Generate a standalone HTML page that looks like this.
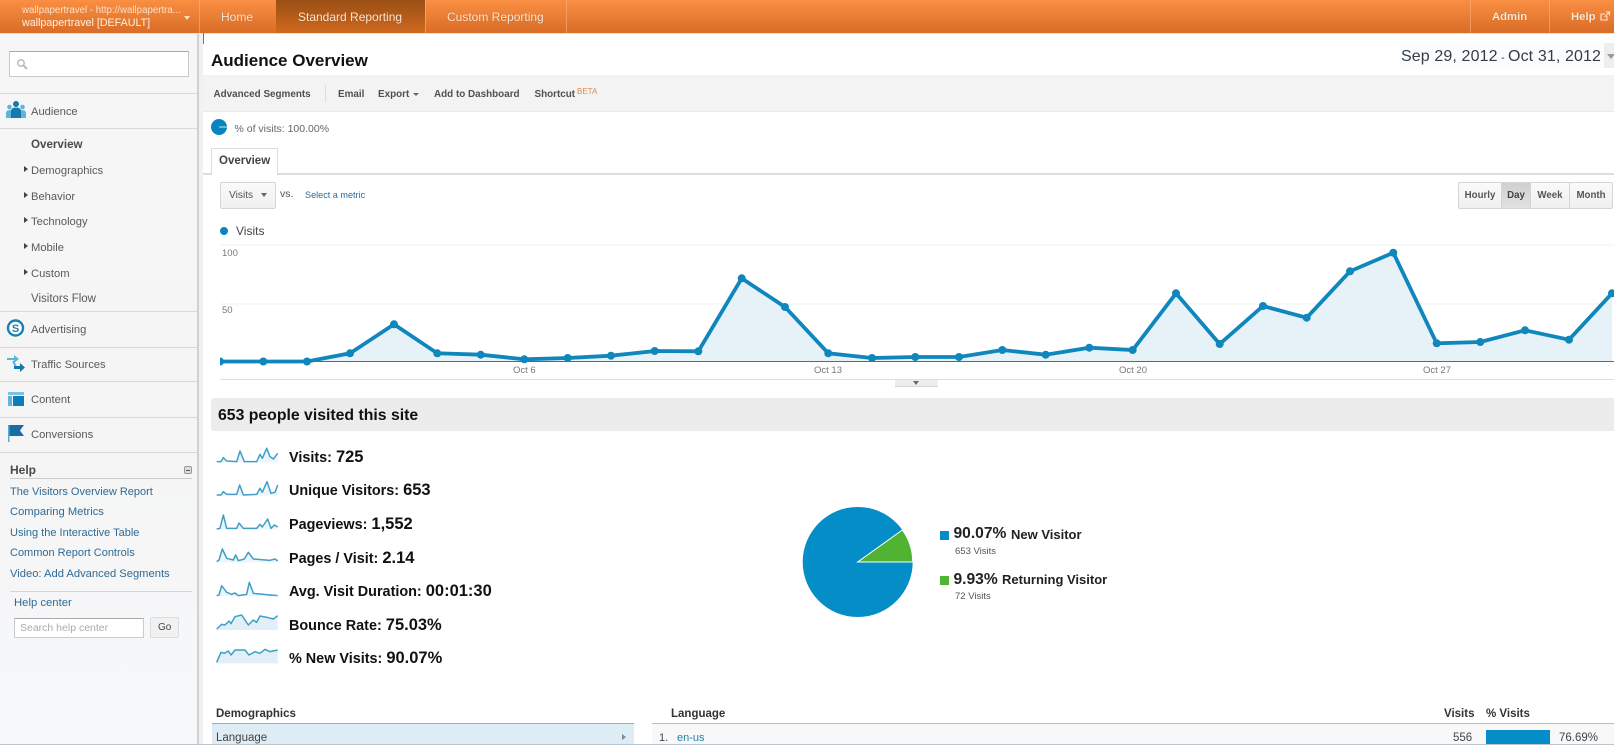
<!DOCTYPE html>
<html><head><meta charset="utf-8"><title>Audience Overview</title>
<style>
html,body{margin:0;padding:0;background:#fff}
body{position:relative;width:1614px;height:745px;overflow:hidden;font-family:"Liberation Sans",Arial,sans-serif;color:#444;filter:blur(.35px)}
.b{position:absolute;box-sizing:border-box}
.t{position:absolute;white-space:nowrap;line-height:20px;height:20px}
.nav{font-size:12px;color:#fbe6d4;top:7px;text-shadow:0 0 1px rgba(140,60,0,.5)}
.dv{position:absolute;top:0;height:33px;width:1px;background:rgba(250,190,140,.5)}
.s{font-size:11.2px;color:#5a5a5a;left:31px}
.ln{position:absolute;left:0;width:197px;height:1px;background:#d8d8d8}
.ar{position:absolute;left:24px;width:0;height:0;border-left:4px solid #444;border-top:3px solid transparent;border-bottom:3px solid transparent}
.h{font-size:11px;color:#2f6a95;left:10px}
.tb{font-size:9.9px;font-weight:bold;color:#505050;top:85px}
.m{left:289px;font-size:14.4px;font-weight:bold;color:#111}
.m b{font-size:16.5px}
.cell{position:absolute;top:182px;height:27px;line-height:26px;text-align:center;font-size:9.7px;font-weight:bold;color:#555;border:1px solid #d5d5d5;background:linear-gradient(#fafafa,#f0f0f0);box-sizing:border-box}
</style></head><body>

<!-- header -->
<div class="b" style="left:0;top:0;width:1614px;height:33px;background:linear-gradient(#f98f42,#d96c27)"></div>
<div class="b" style="left:276px;top:0;width:149px;height:33px;background:linear-gradient(#9a4f14,#d0691f)"></div>
<div class="dv" style="left:199px"></div><div class="dv" style="left:425px"></div><div class="dv" style="left:566px"></div><div class="dv" style="left:1470px"></div><div class="dv" style="left:1549px"></div>
<div class="b" style="left:0;top:33px;width:1614px;height:1px;background:#f3ddc8"></div>
<div class="t" style="left:22px;top:1px;font-size:9.7px;color:#fde0c6">wallpapertravel - http://wallpapertra...</div>
<div class="t" style="left:22px;top:13px;font-size:10.7px;color:#fff0e2">wallpapertravel [DEFAULT]</div>
<div class="b" style="left:184px;top:16px;width:0;height:0;border:3.5px solid transparent;border-top:4px solid #fde0c6;border-bottom:0"></div>
<div class="t nav" style="left:221px">Home</div>
<div class="t nav" style="left:298px">Standard Reporting</div>
<div class="t nav" style="left:447px">Custom Reporting</div>
<div class="t nav" style="left:1492px;font-size:11.3px;font-weight:bold">Admin</div>
<div class="t nav" style="left:1571px;font-size:11.3px;font-weight:bold">Help</div>
<svg class="b" style="left:1600px;top:11px" width="10" height="11" viewBox="0 0 10 11"><path d="M7 5v4H1V3h4M4.500 6L9 1.500M6 1h3.500v3.500" fill="none" stroke="#fbe6d4" stroke-width="1.100"/></svg>

<!-- sidebar -->
<div class="b" style="left:0;top:34px;width:197px;height:711px;background:linear-gradient(#f6f6f6 0,#f5f5f5 420px,#f7f8fa 100%)"></div>
<div class="b" style="left:197px;top:34px;width:2px;height:711px;background:#d0d0d0"></div>
<div class="b" style="left:199px;top:34px;width:4px;height:711px;background:#f1f1f1"></div>
<div class="b" style="left:203px;top:33px;width:1px;height:11px;background:#777"></div>
<div class="b" style="left:9px;top:51px;width:180px;height:26px;background:#fff;border:1px solid #c9c9c9;border-top-color:#aaa"></div>
<svg class="b" style="left:16px;top:58px" width="13" height="13" viewBox="0 0 13 13"><circle cx="5" cy="5" r="3.200" fill="none" stroke="#bbb" stroke-width="1.500"/><path d="M7.500 7.500L11 11" stroke="#bbb" stroke-width="2"/></svg>
<div class="ln" style="top:93px"></div>
<div class="ln" style="top:128px"></div>
<svg class="b" style="left:5px;top:100px" width="22" height="19" viewBox="0 0 22 19"><circle cx="4.500" cy="7" r="2.300" fill="#5fb5d8"/><circle cx="17.500" cy="7" r="2.300" fill="#5fb5d8"/><path d="M1 18v-4q0-4 3.500-4t3.500 4v4zM14 18v-4q0-4 3.500-4t3.500 4v4z" fill="#5fb5d8"/><circle cx="11" cy="4" r="3" fill="#1479ab"/><path d="M6 18v-7q0-3.500 5-3.500t5 3.500v7z" fill="#1479ab"/></svg>
<div class="t s" style="top:102px">Audience</div>
<div class="t s" style="top:135px;font-weight:bold;color:#4a4a4a;font-size:11.6px">Overview</div>
<div class="ar" style="top:166px"></div><div class="t s" style="top:161px">Demographics</div>
<div class="ar" style="top:192px"></div><div class="t s" style="top:187px">Behavior</div>
<div class="ar" style="top:217px"></div><div class="t s" style="top:212px">Technology</div>
<div class="ar" style="top:243px"></div><div class="t s" style="top:238px">Mobile</div>
<div class="ar" style="top:269px"></div><div class="t s" style="top:264px">Custom</div>
<div class="t s" style="top:288.500px;font-size:11.500px">Visitors Flow</div>
<div class="ln" style="top:311px"></div>
<svg class="b" style="left:6px;top:319px" width="19" height="19" viewBox="0 0 19 19"><circle cx="9.500" cy="9" r="7.500" fill="#fff" stroke="#1a80b0" stroke-width="2.400"/><text x="9.500" y="13" text-anchor="middle" font-size="11" font-weight="bold" fill="#1a80b0" font-family="Liberation Sans">S</text></svg>
<div class="t s" style="top:320px">Advertising</div>
<div class="ln" style="top:347px"></div>
<svg class="b" style="left:6px;top:353px" width="20" height="20" viewBox="0 0 20 20"><path d="M1 5h7V2l5 4-5 4V7H1z" fill="#5fb5d8"/><path d="M7 8l3 6" stroke="#5fb5d8" stroke-width="2"/><path d="M8 13h6v-3l5 4.500-5 4.500v-3H8z" fill="#1479ab"/></svg>
<div class="t s" style="top:355px">Traffic Sources</div>
<div class="ln" style="top:381px"></div>
<svg class="b" style="left:8px;top:392px" width="16" height="14" viewBox="0 0 16 14"><rect width="16" height="3" fill="#7cc3e0"/><rect y="4" width="4" height="10" fill="#5fb5d8"/><rect x="5" y="4" width="11" height="10" fill="#0d7fb8"/></svg>
<div class="t s" style="top:390px">Content</div>
<div class="ln" style="top:417px"></div>
<svg class="b" style="left:7px;top:424px" width="18" height="19" viewBox="0 0 18 19"><rect x="1" y="1" width="1.500" height="17" fill="#5fa8cc"/><path d="M2.500 1H17l-4 5.500 4 5.500H2.500z" fill="#1a6ea6"/></svg>
<div class="t s" style="top:425px">Conversions</div>
<div class="ln" style="top:452px"></div>
<div class="t" style="left:10px;top:460px;font-size:12px;font-weight:bold;color:#4a4a4a">Help</div>
<div class="b" style="left:184px;top:466px;width:8px;height:8px;background:#ddd;border:1px solid #999;border-radius:2px"><div class="b" style="left:1px;top:2.500px;width:4px;height:1px;background:#555"></div></div>
<div class="b" style="left:10px;top:478px;width:182px;height:1px;background:#ccc"></div>
<div class="t h" style="top:482px">The Visitors Overview Report</div>
<div class="t h" style="top:502px;font-size:11.200px">Comparing Metrics</div>
<div class="t h" style="top:522.500px">Using the Interactive Table</div>
<div class="t h" style="top:543px">Common Report Controls</div>
<div class="t h" style="top:564px;font-size:11.200px">Video: Add Advanced Segments</div>
<div class="b" style="left:10px;top:591px;width:182px;height:1px;background:#d5d5d5"></div>
<div class="t h" style="left:14px;top:593px;font-size:11.300px">Help center</div>
<div class="b" style="left:14px;top:618px;width:130px;height:20px;background:#fff;border:1px solid #ccc;border-top-color:#aaa"></div>
<div class="t" style="left:20px;top:617.500px;font-size:10.500px;color:#aaa">Search help center</div>
<div class="b" style="left:150px;top:617px;width:29px;height:21px;background:#f1f1f1;border:1px solid #ddd;border-radius:2px"></div>
<div class="t" style="left:158px;top:618px;font-size:10px;color:#444">Go</div>

<!-- title -->
<div class="t" style="left:211px;top:51px;font-size:17px;font-weight:bold;color:#111">Audience Overview</div>
<div class="b" style="left:1400px;top:43px;width:214px;height:25px;background:#fbfcff"></div>
<div class="b" style="left:1604px;top:43px;width:10px;height:25px;background:#eee"></div>
<div class="t" style="left:1401px;top:47px;font-size:16px;color:#333c48;letter-spacing:.12px">Sep 29, 2012</div>
<div class="t" style="left:1501px;top:48px;font-size:11px;color:#333c48">-</div>
<div class="t" style="left:1508px;top:47px;font-size:16px;color:#333c48;letter-spacing:.12px">Oct 31, 2012</div>
<div class="b" style="left:1607px;top:54px;width:0;height:0;border:4px solid transparent;border-top:5px solid #999;border-bottom:0"></div>

<!-- toolbar -->
<div class="b" style="left:203px;top:75px;width:1411px;height:37px;background:#f3f3f3;border-bottom:1px solid #eaeaea"></div>
<div class="t tb" style="left:213.500px">Advanced Segments</div>
<div class="b" style="left:325px;top:85px;width:1px;height:17px;background:#ddd"></div>
<div class="t tb" style="left:338px">Email</div>
<div class="t tb" style="left:378px">Export</div>
<div class="b" style="left:413px;top:93px;width:0;height:0;border:3px solid transparent;border-top:3px solid #666;border-bottom:0"></div>
<div class="t tb" style="left:434px">Add to Dashboard</div>
<div class="t tb" style="left:534.500px">Shortcut</div>
<div class="t" style="left:577px;top:81.500px;font-size:8px;color:#e58a45">BETA</div>

<!-- segment -->
<svg class="b" style="left:210px;top:118px" width="18" height="18" viewBox="0 0 18 18"><circle cx="9" cy="9" r="8" fill="#0a84bf"/><path d="M9 9H17" stroke="#fff" stroke-width=".8"/></svg>
<div class="t" style="left:234.500px;top:119px;font-size:10.500px;color:#666">% of visits: 100.00%</div>

<!-- tabs -->
<div class="b" style="left:203px;top:173px;width:1411px;height:2px;background:#ddd"></div>
<div class="b" style="left:211px;top:148px;width:67px;height:27px;background:#fff;border:1px solid #ddd;border-bottom:0"></div>
<div class="t" style="left:219px;top:150.500px;font-size:11.500px;font-weight:bold;color:#444">Overview</div>

<!-- controls -->
<div class="b" style="left:220px;top:182px;width:56px;height:27px;background:linear-gradient(#fafafa,#f0f0f0);border:1px solid #d5d5d5;border-radius:2px"></div>
<div class="t" style="left:229px;top:185.500px;font-size:10.200px;color:#555">Visits</div>
<div class="b" style="left:261px;top:193px;width:0;height:0;border:3.500px solid transparent;border-top:4px solid #666;border-bottom:0"></div>
<div class="t" style="left:280px;top:184px;font-size:10.500px;color:#555">vs.</div>
<div class="t" style="left:305px;top:185px;font-size:9.100px;color:#2a6a9a">Select a metric</div>
<div class="cell" style="left:1458px;width:44px;border-radius:2px 0 0 2px">Hourly</div>
<div class="cell" style="left:1501px;width:30px;background:linear-gradient(#cfcfcf,#e2e2e2);color:#444">Day</div>
<div class="cell" style="left:1530px;width:40px">Week</div>
<div class="cell" style="left:1569px;width:44px;border-radius:0 2px 2px 0">Month</div>

<div class="b" style="left:220px;top:227px;width:8px;height:8px;border-radius:50%;background:#0a84bf"></div>
<div class="t" style="left:236px;top:221px;font-size:12px;color:#444">Visits</div>

<!-- chart -->
<svg class="b" style="left:220px;top:230px" width="1394" height="170" viewBox="220 230 1394 170">
<path d="M220 245H1614M220 304H1614" stroke="#f1f1f1" stroke-width="1"/>
<path d="M220 362L263.300 361.700 307 362 350 353.300 394 324.300 437.300 353.300 480.700 354.700 524.300 359.300 567.700 358 611 355.700 654.700 351 698.300 351.300 741.700 278.300 785 307 828.300 353.300 872 358 915.300 357 959 357 1002.300 350 1045.700 354.700 1089.300 347.700 1132.700 350 1176 293.300 1219.700 344 1263 306 1306.700 317.700 1350 271.300 1393.300 252.700 1436.700 343.300 1480.300 342 1525 330.300 1569 339.700 1612 293.300V362Z" fill="#e6f1f8"/>
<path d="M220 361.500H1614" stroke="#666" stroke-width="1"/>
<path d="M220 379.500H1614" stroke="#dedede" stroke-width="1"/>
<path d="M220 361.500L263.300 361.500 307 361.500 350 353.300 394 324.300 437.300 353.300 480.700 354.700 524.300 359.300 567.700 358 611 355.700 654.700 351 698.300 351.300 741.700 278.300 785 307 828.300 353.300 872 358 915.300 357 959 357 1002.300 350 1045.700 354.700 1089.300 347.700 1132.700 350 1176 293.300 1219.700 344 1263 306 1306.700 317.700 1350 271.300 1393.300 252.700 1436.700 343.300 1480.300 342 1525 330.300 1569 339.700 1612 293.300" fill="none" stroke="#0f87bd" stroke-width="3.800"/>
<g fill="#0f87bd"><circle cx="220" cy="361.500" r="4"/><circle cx="263.300" cy="361.500" r="4"/><circle cx="307" cy="361.500" r="4"/><circle cx="350" cy="353.300" r="4"/><circle cx="394" cy="324.300" r="4"/><circle cx="437.300" cy="353.300" r="4"/><circle cx="480.700" cy="354.700" r="4"/><circle cx="524.300" cy="359.300" r="4"/><circle cx="567.700" cy="358" r="4"/><circle cx="611" cy="355.700" r="4"/><circle cx="654.700" cy="351" r="4"/><circle cx="698.300" cy="351.300" r="4"/><circle cx="741.700" cy="278.300" r="4"/><circle cx="785" cy="307" r="4"/><circle cx="828.300" cy="353.300" r="4"/><circle cx="872" cy="358" r="4"/><circle cx="915.300" cy="357" r="4"/><circle cx="959" cy="357" r="4"/><circle cx="1002.300" cy="350" r="4"/><circle cx="1045.700" cy="354.700" r="4"/><circle cx="1089.300" cy="347.700" r="4"/><circle cx="1132.700" cy="350" r="4"/><circle cx="1176" cy="293.300" r="4"/><circle cx="1219.700" cy="344" r="4"/><circle cx="1263" cy="306" r="4"/><circle cx="1306.700" cy="317.700" r="4"/><circle cx="1350" cy="271.300" r="4"/><circle cx="1393.300" cy="252.700" r="4"/><circle cx="1436.700" cy="343.300" r="4"/><circle cx="1480.300" cy="342" r="4"/><circle cx="1525" cy="330.300" r="4"/><circle cx="1569" cy="339.700" r="4"/><circle cx="1612" cy="293.300" r="4"/></g>
</svg>
<div class="t" style="left:222px;top:243.500px;font-size:9.500px;color:#777">100</div>
<div class="t" style="left:222px;top:300.500px;font-size:9.500px;color:#777">50</div>
<div class="t" style="left:513px;top:361px;font-size:9.500px;color:#777">Oct 6</div>
<div class="t" style="left:814px;top:361px;font-size:9.500px;color:#777">Oct 13</div>
<div class="t" style="left:1119px;top:361px;font-size:9.500px;color:#777">Oct 20</div>
<div class="t" style="left:1423px;top:361px;font-size:9.500px;color:#777">Oct 27</div>
<div class="b" style="left:895px;top:380px;width:43px;height:7px;background:#eee;border-bottom:1px solid #d5d5d5"></div>
<div class="b" style="left:913px;top:381px;width:0;height:0;border:3.500px solid transparent;border-top:4px solid #666;border-bottom:0"></div>

<!-- section bar -->
<div class="b" style="left:211px;top:398px;width:1403px;height:33px;background:#ececec;border-radius:3px 0 0 3px"></div>
<div class="t" style="left:218px;top:405.500px;font-size:15.800px;font-weight:bold;color:#111">653 people visited this site</div>

<!-- sparklines -->
<svg class="b" style="left:205px;top:435px" width="310" height="240" viewBox="0 0 930 720">
<g fill="#eef5fa" stroke="none">
<path d="M35 80L48 80 55 68 65 78 95 80 105 48 118 80 155 80 165 58 172 70 185 40 195 65 205 72 218 55V82H35Z"/>
<path d="M35 180L48 180 55 170 65 178 95 178 104 150 115 180 155 178 165 160 172 172 186 140 198 175 210 172 218 150V182H35Z"/>
<path d="M35 282L45 280 55 240 65 280 95 280 102 264 115 280 155 280 165 268 172 276 188 252 198 280 208 270 218 276V283H35Z"/>
<path d="M35 380L42 375 52 342 65 370 85 375 92 360 100 377 118 372 130 352 145 372 195 376 210 372 218 378V382H35Z"/>
<path d="M35 482L42 480 50 452 65 472 80 478 90 474 100 482 125 478 133 442 145 475 195 480 218 482V483H35Z"/>
<path fill="#e2eff7" d="M35 582L50 568 60 570 72 558 78 566 90 545 110 540 130 570 145 555 155 562 165 543 190 548 205 552 218 542V585H35Z"/>
<path fill="#e2eff7" d="M35 682L48 652 58 655 70 648 78 660 90 645 120 645 132 660 150 650 165 655 180 643 195 650 218 645V685H35Z"/>
</g>
<g fill="none" stroke="#3f9fc6" stroke-width="4.500" stroke-linejoin="round">
<path d="M35 80L48 80 55 68 65 78 95 80 105 48 118 80 155 80 165 58 172 70 185 40 195 65 205 72 218 55"/>
<path d="M35 180L48 180 55 170 65 178 95 178 104 150 115 180 155 178 165 160 172 172 186 140 198 175 210 172 218 150"/>
<path d="M35 282L45 280 55 240 65 280 95 280 102 264 115 280 155 280 165 268 172 276 188 252 198 280 208 270 218 276"/>
<path d="M35 380L42 375 52 342 65 370 85 375 92 360 100 377 118 372 130 352 145 372 195 376 210 372 218 378"/>
<path d="M35 482L42 480 50 452 65 472 80 478 90 474 100 482 125 478 133 442 145 475 195 480 218 482"/>
<path d="M35 582L50 568 60 570 72 558 78 566 90 545 110 540 130 570 145 555 155 562 165 543 190 548 205 552 218 542"/>
<path d="M35 682L48 652 58 655 70 648 78 660 90 645 120 645 132 660 150 650 165 655 180 643 195 650 218 645"/>
</g></svg>
<div class="t m" style="top:447px">Visits: <b>725</b></div>
<div class="t m" style="top:480px">Unique Visitors: <b>653</b></div>
<div class="t m" style="top:514px">Pageviews: <b>1,552</b></div>
<div class="t m" style="top:548px">Pages / Visit: <b>2.14</b></div>
<div class="t m" style="top:581px">Avg. Visit Duration: <b>00:01:30</b></div>
<div class="t m" style="top:615px">Bounce Rate: <b>75.03%</b></div>
<div class="t m" style="top:648px">% New Visits: <b>90.07%</b></div>

<!-- pie -->
<svg class="b" style="left:795px;top:500px" width="130" height="125" viewBox="795 500 130 125">
<circle cx="857.700" cy="562" r="55" fill="#058dc7"/>
<path d="M857.700 562L912.700 562A55 55 0 0 0 902.400 529.900Z" fill="#50b432" stroke="#fff" stroke-width="1"/>
</svg>
<div class="b" style="left:940px;top:531px;width:9px;height:9px;background:#058dc7"></div>
<div class="t" style="left:953.500px;top:524px;font-size:15.600px;font-weight:bold;color:#222">90.07%</div>
<div class="t" style="left:1011px;top:525px;font-size:13px;font-weight:bold;color:#222">New Visitor</div>
<div class="t" style="left:955px;top:542px;font-size:9.500px;color:#555">653 Visits</div>
<div class="b" style="left:940px;top:576px;width:9px;height:9px;background:#50b432"></div>
<div class="t" style="left:953.500px;top:570px;font-size:15.600px;font-weight:bold;color:#222">9.93%</div>
<div class="t" style="left:1002px;top:570px;font-size:13px;font-weight:bold;color:#222">Returning Visitor</div>
<div class="t" style="left:955px;top:587px;font-size:9.500px;color:#555">72 Visits</div>

<!-- tables -->
<div class="t" style="left:216px;top:704px;font-size:11.500px;font-weight:bold;color:#333">Demographics</div>
<div class="b" style="left:212px;top:723px;width:422px;height:1.500px;background:#aaa"></div>
<div class="b" style="left:212px;top:724px;width:422px;height:20px;background:#ddecf5"></div>
<div class="t" style="left:216px;top:728px;font-size:11.500px;color:#444">Language</div>
<div class="b" style="left:622px;top:734px;width:0;height:0;border-left:4px solid #888;border-top:3px solid transparent;border-bottom:3px solid transparent"></div>
<div class="t" style="left:671px;top:704px;font-size:11.500px;font-weight:bold;color:#333">Language</div>
<div class="b" style="left:652px;top:723px;width:962px;height:1.500px;background:#bbb"></div>
<div class="b" style="left:652px;top:724px;width:962px;height:20px;background:#f8f8f8"></div>
<div class="t" style="left:659px;top:728px;font-size:11px;color:#444">1.</div>
<div class="t" style="left:677px;top:728px;font-size:11px;color:#1f80ab">en-us</div>
<div class="t" style="left:1444px;top:704px;font-size:11.500px;font-weight:bold;color:#333">Visits</div>
<div class="t" style="left:1486px;top:704px;font-size:11.500px;font-weight:bold;color:#333">% Visits</div>
<div class="t" style="left:1453px;top:728px;font-size:11.500px;color:#444">556</div>
<div class="b" style="left:1486px;top:730px;width:64px;height:14px;background:#058dc7"></div>
<div class="t" style="left:1559px;top:728px;font-size:11.500px;color:#444">76.69%</div>
<div class="b" style="left:0;top:744px;width:1614px;height:1px;background:#bcc6cf"></div>
</body></html>
